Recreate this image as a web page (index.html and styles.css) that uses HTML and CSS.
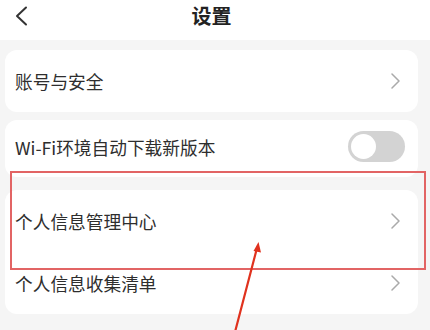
FILE: index.html
```html
<!DOCTYPE html>
<html lang="zh-CN">
<head>
<meta charset="utf-8">
<link rel="stylesheet" href="styles.css">
</head>
<body>
<div class="page">
  <header class="header">
    <svg class="back" width="14" height="20" viewBox="0 0 14 20"><path d="M12 1.5 L3 10 L12 18.5" fill="none" stroke="#333" stroke-width="2" stroke-linecap="round" stroke-linejoin="round"/></svg>
    <div class="title">设置</div>
  </header>
  <main class="content">
    <section class="card card-a">
      <div class="row">
        <span class="label">账号与安全</span>
        <svg class="chev" width="9" height="16" viewBox="0 0 9 16"><path d="M1 1 L8 8 L1 15" fill="none" stroke="#aaa" stroke-width="1.5" stroke-linecap="round" stroke-linejoin="round"/></svg>
      </div>
    </section>
    <section class="card card-b">
      <div class="row row-short">
        <span class="label">Wi-Fi环境自动下载新版本</span>
        <span class="toggle"><span class="knob"></span></span>
      </div>
    </section>
    <section class="card card-c">
      <div class="row">
        <span class="label">个人信息管理中心</span>
        <svg class="chev" width="9" height="16" viewBox="0 0 9 16"><path d="M1 1 L8 8 L1 15" fill="none" stroke="#aaa" stroke-width="1.5" stroke-linecap="round" stroke-linejoin="round"/></svg>
      </div>
      <div class="row">
        <span class="label">个人信息收集清单</span>
        <svg class="chev" width="9" height="16" viewBox="0 0 9 16"><path d="M1 1 L8 8 L1 15" fill="none" stroke="#aaa" stroke-width="1.5" stroke-linecap="round" stroke-linejoin="round"/></svg>
      </div>
    </section>
  </main>
  <div class="highlight"></div>
  <svg class="arrow" width="430" height="330" viewBox="0 0 430 330">
    <line x1="235" y1="332" x2="257" y2="248" stroke="#e0321e" stroke-width="2.2" stroke-linecap="round"/>
    <path d="M258.5 242 L253.5 251 L261 252.5 Z" fill="#e0321e"/>
  </svg>
</div>
</body>
</html>
```
FILE: styles.css
```css
* { box-sizing: border-box; }
html, body { margin: 0; padding: 0; }
body {
  background: #f5f5f5;
  font-family: "Noto Sans CJK SC", "Noto Sans", sans-serif;
  color: #333;
}
.page {
  position: relative;
  width: 430px;
  height: 330px;
  overflow: hidden;
  background: #f5f5f5;
}
.header {
  height: 40px;
  background: #fff;
  display: flex;
  align-items: flex-start;
  justify-content: center;
  padding-right: 7px;
  position: relative;
}
.back {
  position: absolute;
  left: 14px;
  top: 6px;
}
.title {
  font-size: 20px;
  font-weight: 700;
  line-height: 32px;
  color: #222;
}
.content {
  padding: 10px 12px 0 5px;
  display: flex;
  flex-direction: column;
}
.card {
  background: #fff;
  border-radius: 12px;
}
.card-a { margin-bottom: 8px; }
.card-b { margin-bottom: 13px; }
.row {
  height: 62px;
  display: flex;
  align-items: center;
  justify-content: space-between;
  padding: 0 18px 0 10px;
}
.row-short {
  height: 57px;
  padding-right: 13px;
  padding-bottom: 4px;
}
.label {
  font-size: 17.7px;
  color: #2e2e2e;
}
.chev { display: block; }
.toggle {
  width: 57px;
  height: 31px;
  border-radius: 16px;
  background: #d3d3d3;
  display: flex;
  align-items: center;
  padding-left: 3px;
}
.knob {
  width: 25px;
  height: 25px;
  border-radius: 50%;
  background: #fff;
}
.highlight {
  position: absolute;
  left: 10px;
  top: 171px;
  width: 416px;
  height: 99px;
  border: 2px solid #e26464;
}
.arrow {
  position: absolute;
  left: 0;
  top: 0;
}
```
